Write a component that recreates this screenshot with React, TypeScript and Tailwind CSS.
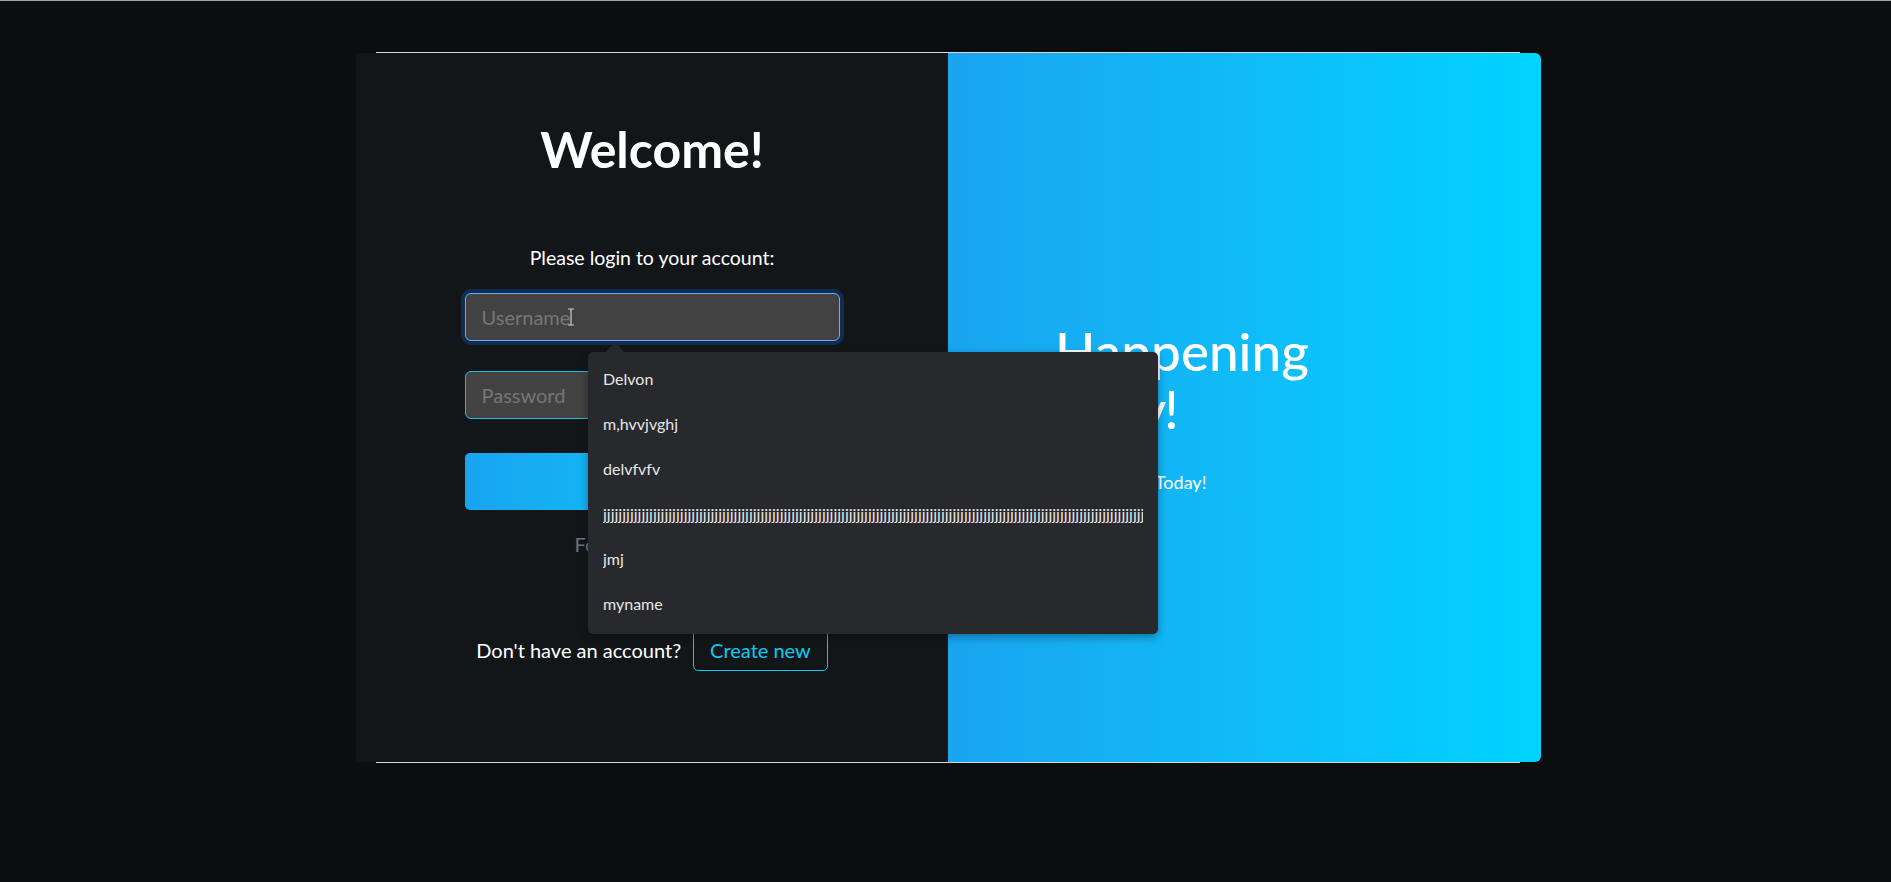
import React from "react";

const savedNames = ["Delvon", "m,hvvjvghj", "delvfvfv", "j".repeat(150), "jmj", "myname"];

function AutofillMenu() {
  return (
    <div className="absolute left-[232px] top-[290px] w-[570px]">
      <svg width="18" height="10" viewBox="0 0 18 10" className="ml-[18px] block">
        <path d="M0 10 L9 0 L18 10 Z" fill="#28292d" />
      </svg>
      <div className="rounded-[5px] bg-[#28292d] pt-[4px] pb-[8px] shadow-[0_3px_8px_rgba(0,0,0,0.35)]">
        {savedNames.map((name) => (
          <div key={name} className="h-[45px] px-[15px] text-[16px] leading-[45px] text-[#e6e6e6]">
            <div className="overflow-hidden whitespace-nowrap">{name}</div>
          </div>
        ))}
      </div>
    </div>
  );
}

function LoginForm() {
  return (
    <div className="flex w-[592px] flex-col items-center bg-[#131619] pt-[66px]">
      <h1 className="text-[50px] font-bold leading-[60px] text-white">Welcome!</h1>
      <p className="mt-[67px] text-[19.5px] leading-[24px] text-white">Please login to your account:</p>

      <div className="relative mt-[23px] w-[375px]">
        <input
          placeholder="Username"
          className="h-[48px] w-full rounded-[6px] border border-[#6ea8fe] bg-[#424242] px-[16px] text-[20px] text-white outline-none shadow-[0_0_0_4px_rgba(13,110,253,0.25)] placeholder:text-[#767676]"
        />
        <svg width="8" height="18" viewBox="0 0 8 18" className="absolute left-[102px] top-[15px]">
          <path d="M1 1h6M4 1v16M1 17h6" stroke="#cfcfcf" strokeWidth="1.2" fill="none" />
        </svg>
      </div>

      <input
        type="password"
        placeholder="Password"
        className="mt-[30px] h-[48px] w-[375px] rounded-[6px] border border-[#17bde9] bg-[#424242] px-[16px] text-[20px] text-white outline-none placeholder:text-[#767676]"
      />

      <button className="mt-[34px] h-[57px] w-[375px] rounded-[5px] bg-gradient-to-r from-[#19a4ef] to-[#00d3ff] text-[20px] text-white">
        Log in
      </button>

      <a href="#!" className="mt-[22px] text-[20px] leading-[24px] text-[#6c757d]">
        Forgot password?
      </a>

      <div className="mt-[72px] flex items-center gap-[12px]">
        <p className="text-[20px] text-white">Don't have an account?</p>
        <button className="h-[43px] rounded-[5px] border border-[#0dcaf0] px-[16px] text-[20px] text-[#0dcaf0]">
          Create new
        </button>
      </div>
    </div>
  );
}

export default function App() {
  return (
    <div className="min-h-screen border-t border-[#a3a3a3] bg-[#0c0d0f] pt-[51px] font-['Lato',sans-serif]">
      <div className="relative ml-[356px] w-[1185px]">
        <div className="ml-[20px] mr-[21px] border-y border-[#d9d9d9]">
          <div className="-ml-[20px] -mr-[21px] flex h-[709px]">
            <LoginForm />
            <div className="flex flex-1 items-center rounded-r-[6px] bg-gradient-to-r from-[#19a4ef] to-[#00d3ff] pl-[107px]">
              <div className="w-[330px] text-white">
                <h2 className="text-[53px] font-medium leading-[58px]">
                  Happening <span className="tracking-[-2px]">Daily!</span>
                </h2>
                <p className="mt-[32px] pl-[5px] text-[18px] leading-[24px]">Get Started Today!</p>
              </div>
            </div>
          </div>
        </div>
        <AutofillMenu />
      </div>
    </div>
  );
}
